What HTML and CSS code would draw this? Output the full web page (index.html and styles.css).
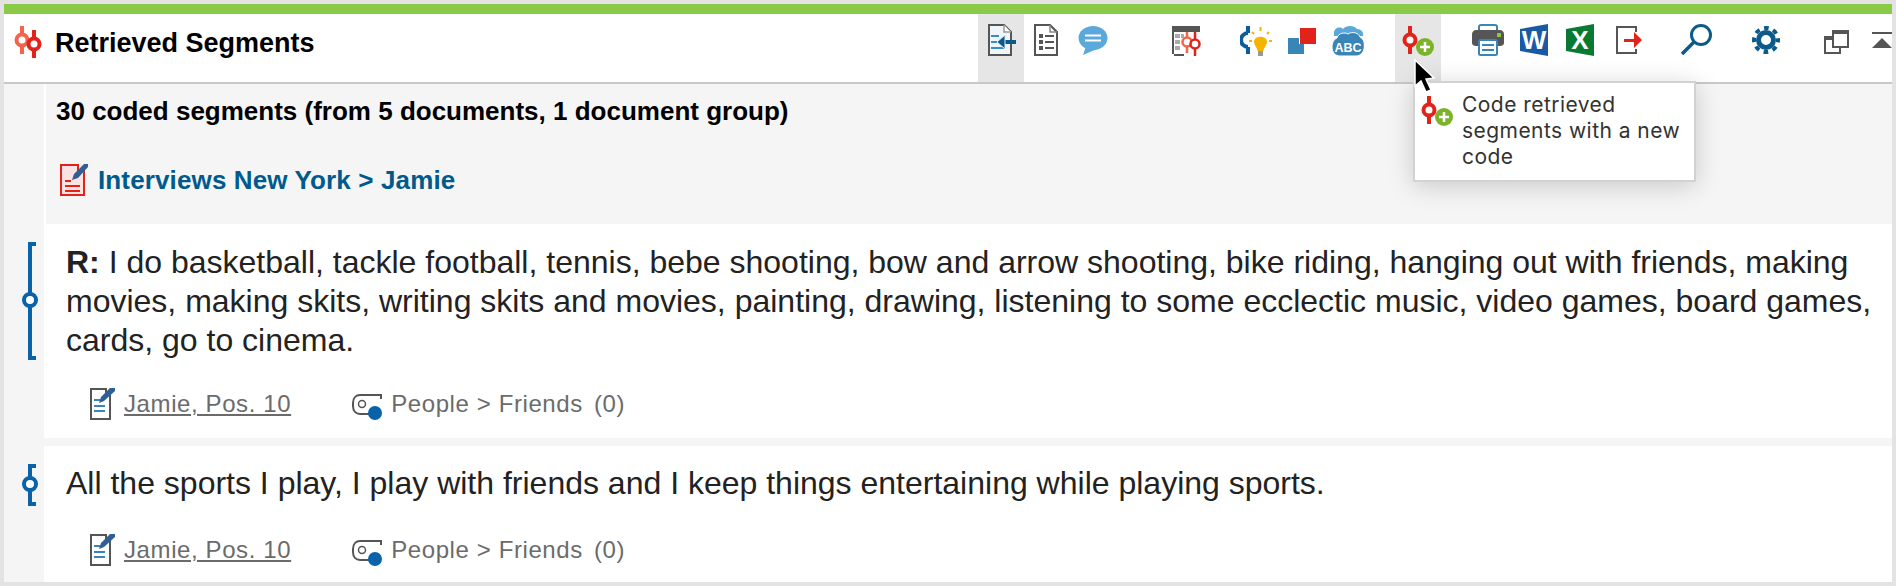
FILE: index.html
```html
<!DOCTYPE html>
<html lang="en">
<head>
<meta charset="utf-8">
<title>Retrieved Segments</title>
<link rel="stylesheet" href="styles.css">
</head>
<body>
<div class="app">
  <div class="accent"></div>
  <header class="toolbar">
    <svg class="title-icon" width="32" height="32" viewBox="0 0 32 32">
      <path d="M8 0V28" fill="none" stroke="#f5634a" stroke-width="4"/>
      <circle cx="8" cy="14" r="5.5" fill="#fff" stroke="#f5634a" stroke-width="4"/>
      <path d="M20 4V32" fill="none" stroke="#e2231a" stroke-width="4"/>
      <circle cx="20" cy="18" r="5.5" fill="#fff" stroke="#e2231a" stroke-width="4"/>
    </svg>
    <h1 class="title">Retrieved Segments</h1>

    <div class="group">
      <div class="tool active">
        <svg width="32" height="32" viewBox="0 0 32 32">
          <path d="M4 1H19L26 8V31H4Z" fill="#eef6fb" stroke="#555" stroke-width="2"/>
          <path d="M19 1V8H26" fill="#fff" stroke="#999" stroke-width="1.5"/>
          <path d="M6 12H14M6 18H12M6 24H19" stroke="#3b8cc4" stroke-width="2"/>
          <path d="M15 18H31" stroke="#0b5a8a" stroke-width="4"/>
          <path d="M12 18L20 11V25Z" fill="#0b5a8a" stroke="#dfeaf2"/>
        </svg>
      </div>
      <div class="tool">
        <svg width="32" height="32" viewBox="0 0 32 32">
          <path d="M4 1H19L26 8V31H4Z" fill="#fff" stroke="#555" stroke-width="2"/>
          <path d="M19 1V8H26" fill="none" stroke="#888" stroke-width="1.5"/>
          <path d="M8 10H12V14H8ZM8 16H12V20H8ZM8 22H12V26H8Z" fill="#555"/>
          <path d="M14 12H23M14 18H23M14 24H23" stroke="#555" stroke-width="2"/>
        </svg>
      </div>
      <div class="tool">
        <svg width="32" height="32" viewBox="0 0 32 32">
          <ellipse cx="16" cy="14" rx="14.5" ry="12" fill="#5ba9db"/>
          <path d="M9 22L6 31L20 25Z" fill="#5ba9db"/>
          <path d="M8 11.5H24M8 16.5H24" stroke="#fff" stroke-width="2"/>
        </svg>
      </div>
    </div>

    <div class="group group-wide">
      <div class="tool">
        <svg width="32" height="32" viewBox="0 0 32 32">
          <path d="M2 2H30V8H4V32H14V30H2Z" fill="#555"/>
          <path d="M5 10H10V14H5ZM5 16H10V20H5ZM5 22H10V26H5ZM11 10H14V14H11Z" fill="#aaa"/>
          <path d="M17 8V29" stroke="#f5634a" stroke-width="2.5" fill="none"/>
          <circle cx="17" cy="18" r="4.5" fill="#fff" stroke="#f5634a" stroke-width="2.5"/>
          <path d="M25 7V32" stroke="#e2231a" stroke-width="2.5" fill="none"/>
          <circle cx="25" cy="20" r="4.5" fill="#fff" stroke="#e2231a" stroke-width="2.5"/>
        </svg>
      </div>
    </div>

    <div class="group">
      <div class="tool">
        <svg width="32" height="32" viewBox="0 0 32 32">
          <path d="M8 2V9M8 23V30" stroke="#0b5e9e" stroke-width="4"/>
          <path d="M8 9A7 7 0 0 0 8 23" fill="none" stroke="#0b5e9e" stroke-width="4"/>
          <path d="M14 18C14 11 27 11 27 18C27 21 24 23 23.500 27H17.500C17 23 14 21 14 18Z" fill="#f4b400"/>
          <rect x="18" y="27" width="5" height="5" fill="#999"/>
          <path d="M9 17H12M29 17H32M12 8L14 10M29 8L27 10M20.500 3V7" stroke="#f4b400" stroke-width="2"/>
        </svg>
      </div>
      <div class="tool">
        <svg width="32" height="32" viewBox="0 0 32 32">
          <rect x="2" y="14" width="16" height="16" fill="#3a85b8"/>
          <rect x="13" y="3" width="17" height="17" fill="#fff"/>
          <rect x="14" y="4" width="16" height="16" fill="#e2231a"/>
        </svg>
      </div>
      <div class="tool">
        <svg width="32" height="32" viewBox="0 0 32 32">
          <path d="M2 9C2 4 8 2 11 5C14 1 22 1 25 5C29 5 32 8 31 12H2Z" fill="#5ba9db"/>
          <path d="M5 14C6 9 13 8 16 10C20 7 27 9 28 13C32 15 33 20 32 25C31 29 28 32 24 32H8C3 32 0 28 0 23C0 19 2 15 5 14Z" fill="#3a85b8" stroke="#fff"/>
          <text class="abc" x="16" y="28">ABC</text>
        </svg>
      </div>
    </div>

    <div class="group">
      <div class="tool active">
        <svg width="32" height="32" viewBox="0 0 32 32">
          <path d="M8 2V30" stroke="#e2231a" stroke-width="4"/>
          <circle cx="8" cy="16" r="5.500" fill="#fff" stroke="#e2231a" stroke-width="4"/>
          <circle cx="23" cy="23" r="9" fill="#7cb32a"/>
          <path d="M18 23H28M23 18V28" stroke="#fff" stroke-width="2.500"/>
        </svg>
      </div>
    </div>

    <div class="group">
      <div class="tool">
        <svg width="32" height="32" viewBox="0 0 32 32">
          <rect x="7" y="1" width="18" height="12" rx="2" fill="#fff" stroke="#3a85b8" stroke-width="2"/>
          <path d="M4 6H28C30 6 32 8 32 10V19C32 21 30 22 28 22H4C2 22 0 21 0 19V10C0 8 2 6 4 6Z" fill="#555"/>
          <rect x="25" y="9" width="4" height="4" fill="#8cc63f"/>
          <rect x="7" y="16" width="18" height="15" rx="1.500" fill="#fff" stroke="#3a85b8" stroke-width="2"/>
          <path d="M10 21H22M10 26H22" stroke="#3a85b8" stroke-width="2"/>
        </svg>
      </div>
      <div class="tool">
        <svg width="32" height="32" viewBox="0 0 32 32">
          <path d="M2 5L30 0V32L2 27Z" fill="#1a5aa5"/>
          <text class="office" x="16" y="25">W</text>
        </svg>
      </div>
      <div class="tool">
        <svg width="32" height="32" viewBox="0 0 32 32">
          <path d="M2 5L30 0V32L2 27Z" fill="#0a7a33"/>
          <text class="office" x="16" y="25">X</text>
        </svg>
      </div>
      <div class="tool">
        <svg width="32" height="32" viewBox="0 0 32 32">
          <path d="M26 8V3H7V29H26V25" fill="none" stroke="#555" stroke-width="2"/>
          <path d="M14 15H24V8L32 16L24 24V18H14Z" fill="#e2231a"/>
        </svg>
      </div>
    </div>

    <div class="group">
      <div class="tool">
        <svg width="32" height="32" viewBox="0 0 32 32">
          <circle cx="21" cy="11" r="9.500" fill="none" stroke="#0b5a8a" stroke-width="3"/>
          <path d="M14 18L2 30" stroke="#0b5a8a" stroke-width="3.500"/>
        </svg>
      </div>
    </div>

    <div class="group">
      <div class="tool">
        <svg width="32" height="32" viewBox="0 0 32 32">
          <circle cx="16" cy="16" r="7.500" fill="none" stroke="#0b5a8a" stroke-width="5"/>
          <circle cx="16" cy="16" r="12" fill="none" stroke="#0b5a8a" stroke-width="4" stroke-dasharray="4.700 4.725" stroke-dashoffset="2.350"/>
        </svg>
      </div>
    </div>

    <div class="group">
      <div class="tool">
        <svg width="32" height="32" viewBox="0 0 32 32">
          <path d="M5 13H20V29H5Z" fill="#fff" stroke="#555" stroke-width="2"/>
          <path d="M4 12H21V16H4Z" fill="#555"/>
          <path d="M13 7H28V23H13Z" fill="#fff" stroke="#555" stroke-width="2"/>
          <path d="M12 6H29V10H12Z" fill="#555"/>
        </svg>
      </div>
      <div class="tool tool-last">
        <svg width="20" height="32" viewBox="0 0 20 32">
          <rect x="0" y="8" width="20" height="2" fill="#555"/>
          <path d="M10 14L20 24H0Z" fill="#555"/>
        </svg>
      </div>
    </div>
  </header>

  <main class="content">
    <section class="row">
      <div class="gutter"></div>
      <div class="summary">
        <p class="count">30 coded segments (from 5 documents, 1 document group)</p>
        <div class="doc-head">
          <svg width="30" height="32" viewBox="0 0 30 32">
            <path d="M1 1H18V6L24 6V31H1Z" fill="#fbe3e3" stroke="#e2231a" stroke-width="2"/>
            <path d="M5 17H11M5 22H20M5 27H20" stroke="#e2231a" stroke-width="2"/>
            <path d="M12 16L14 10L24 0H28V3L18 14Z" fill="#2f5f93"/>
          </svg>
          <h2 class="doc-name">Interviews New York &gt; Jamie</h2>
        </div>
      </div>
    </section>

    <section class="row segment">
      <div class="gutter marker">
        <svg width="20" height="118" viewBox="0 0 20 118">
          <path d="M16 2H10V116H16" fill="none" stroke="#0a62a8" stroke-width="4"/>
          <circle cx="10" cy="58" r="6" fill="#fff" stroke="#0a62a8" stroke-width="4"/>
        </svg>
      </div>
      <div class="seg-body seg-long">
        <p class="seg-text"><b>R:</b> I do basketball, tackle football, tennis, bebe shooting, bow and arrow shooting, bike riding, hanging out with friends, making movies, making skits, writing skits and movies, painting, drawing, listening to some ecclectic music, video games, board games, cards, go to cinema.</p>
        <div class="meta">
          <svg class="meta-doc" width="26" height="32" viewBox="0 0 26 32">
            <path d="M1 1H16V5H20V31H1Z" fill="#fff" stroke="#555" stroke-width="2"/>
            <path d="M4 12H10M4 18H15M4 23H15" stroke="#3a85b8" stroke-width="2"/>
            <path d="M9 15L11 9L20 0H25V3L14 13Z" fill="#2f5f93"/>
          </svg>
          <a class="source">Jamie, Pos. 10</a>
          <svg class="meta-tag" width="32" height="28" viewBox="0 0 32 28">
            <path d="M29 7V3H8C4 3 1 6 1 11V14C1 19 4 22 8 22H19" fill="none" stroke="#555" stroke-width="2"/>
            <circle cx="10" cy="12" r="3.500" fill="none" stroke="#555" stroke-width="1.500"/>
            <circle cx="23" cy="21" r="7" fill="#0a62a8"/>
          </svg>
          <span class="code">People &gt; Friends</span><span class="code-count">(0)</span>
        </div>
      </div>
    </section>

    <div class="row spacer"></div>

    <section class="row segment">
      <div class="gutter marker">
        <svg width="20" height="42" viewBox="0 0 20 42">
          <path d="M16 2H10V40H16" fill="none" stroke="#0a62a8" stroke-width="4"/>
          <circle cx="10" cy="20" r="6" fill="#fff" stroke="#0a62a8" stroke-width="4"/>
        </svg>
      </div>
      <div class="seg-body seg-short">
        <p class="seg-text">All the sports I play, I play with friends and I keep things entertaining while playing sports.</p>
        <div class="meta">
          <svg class="meta-doc" width="26" height="32" viewBox="0 0 26 32">
            <path d="M1 1H16V5H20V31H1Z" fill="#fff" stroke="#555" stroke-width="2"/>
            <path d="M4 12H10M4 18H15M4 23H15" stroke="#3a85b8" stroke-width="2"/>
            <path d="M9 15L11 9L20 0H25V3L14 13Z" fill="#2f5f93"/>
          </svg>
          <a class="source">Jamie, Pos. 10</a>
          <svg class="meta-tag" width="32" height="28" viewBox="0 0 32 28">
            <path d="M29 7V3H8C4 3 1 6 1 11V14C1 19 4 22 8 22H19" fill="none" stroke="#555" stroke-width="2"/>
            <circle cx="10" cy="12" r="3.500" fill="none" stroke="#555" stroke-width="1.500"/>
            <circle cx="23" cy="21" r="7" fill="#0a62a8"/>
          </svg>
          <span class="code">People &gt; Friends</span><span class="code-count">(0)</span>
        </div>
      </div>
    </section>
  </main>

  <div class="tooltip">
    <svg width="32" height="32" viewBox="0 0 32 32">
      <path d="M8 1V29" stroke="#e2231a" stroke-width="4"/>
      <circle cx="8" cy="15" r="5.500" fill="#fff" stroke="#e2231a" stroke-width="4"/>
      <circle cx="23" cy="22" r="9" fill="#7cb32a"/>
      <path d="M18 22H28M23 17V27" stroke="#fff" stroke-width="2.500"/>
    </svg>
    <p class="tooltip-text">Code retrieved segments with a new code</p>
  </div>

  <svg class="cursor" width="24" height="36" viewBox="0 0 24 36">
    <path d="M2 2V28L8 23L13 34L18 32L13 21L21 20Z" fill="#000" stroke="#fff" stroke-width="1.500"/>
  </svg>
</div>
</body>
</html>
```

FILE: styles.css
```css
* { box-sizing: border-box; }

html, body {
  margin: 0;
  height: 100%;
  overflow: hidden;
}

body {
  background: #e3e3e3;
  padding: 4px;
  font-family: "Liberation Sans", Arial, sans-serif;
  color: #222;
}

.app {
  position: relative;
  height: 578px;
  display: flex;
  flex-direction: column;
  background: #fff;
}

.accent {
  height: 10px;
  background: #8aca47;
}

.toolbar {
  height: 70px;
  display: flex;
  align-items: flex-start;
  background: #fff;
  border-bottom: 2px solid #c8c8c8;
}

.title-icon {
  margin: 12px 0 0 10px;
  flex: none;
}

.title {
  flex: 1;
  margin: 0 0 0 9px;
  font-size: 27px;
  font-weight: 700;
  line-height: 58px;
  color: #000;
}

.group {
  display: flex;
  margin-left: 24px;
}

.group-wide { margin-left: 47px; }

.tool {
  width: 46px;
  height: 68px;
  padding-top: 10px;
  display: flex;
  justify-content: center;
  align-items: flex-start;
}

.tool.active { background: #e6e6e6; }

.tool-last {
  width: 33px;
  justify-content: flex-end;
}

.abc {
  font-family: "Liberation Sans", sans-serif;
  font-size: 12.5px;
  font-weight: 700;
  fill: #fff;
  text-anchor: middle;
}

.office {
  font-family: "Liberation Sans", sans-serif;
  font-size: 26px;
  font-weight: 700;
  fill: #fff;
  text-anchor: middle;
}

.content {
  flex: 1;
  display: flex;
  flex-direction: column;
  background: #f5f5f5;
}

.row { display: flex; }

.gutter {
  flex: none;
  width: 42px;
  background: #f5f5f5;
  border-right: 2px solid #fff;
}

.summary {
  flex: 1;
  height: 140px;
  padding: 12px 10px 0;
  background: #f5f5f5;
}

.count {
  margin: 0;
  font-size: 26px;
  font-weight: 700;
  line-height: 30px;
  color: #000;
}

.doc-head {
  display: flex;
  align-items: center;
  margin-top: 38px;
  padding-left: 4px;
}

.doc-name {
  margin: 0 0 0 8px;
  font-size: 26px;
  font-weight: 700;
  letter-spacing: 0.13px;
  line-height: 32px;
  color: #005a8c;
}

.segment { background: #fff; }

.marker {
  width: 40px;
  border-right: 0;
  padding: 18px 0 0 16px;
}

.marker svg { display: block; }

.seg-body {
  flex: 1;
  background: #fff;
  padding-left: 22px;
  padding-right: 12px;
}

.seg-long { height: 214px; padding-top: 19px; }
.seg-short { height: 136px; padding-top: 18px; }

.seg-text {
  margin: 0;
  font-size: 32px;
  line-height: 39px;
  color: #222;
}

.seg-long .meta { margin-top: 28px; }
.seg-short .meta { margin-top: 31px; }

.meta {
  display: flex;
  align-items: center;
  height: 32px;
  padding-left: 24px;
  font-size: 24px;
  color: #6b6b6b;
}

.meta-doc { flex: none; margin-right: 8px; }

.source {
  text-decoration: underline;
  letter-spacing: 0.6px;
  color: #6b6b6b;
}

.meta-tag {
  flex: none;
  margin: 4px 7px 0 61px;
}

.code { letter-spacing: 0.6px; }
.code-count { margin-left: 11px; letter-spacing: 0.6px; }

.spacer {
  height: 8px;
  background: #f5f5f5;
}

.tooltip {
  position: absolute;
  left: 1409px;
  top: 77px;
  width: 283px;
  height: 101px;
  display: flex;
  align-items: flex-start;
  gap: 9px;
  padding: 9px 6px 0;
  background: #fff;
  border: 2px solid #d2d2d2;
  box-shadow: 0 4px 24px rgba(0, 0, 0, 0.18);
}

.tooltip svg { flex: none; margin-top: 3px; }

.tooltip-text {
  margin: 0;
  font-family: Inter, "Liberation Sans", sans-serif;
  font-size: 21px;
  letter-spacing: 0.45px;
  line-height: 26px;
  color: #333;
}

.cursor {
  position: absolute;
  left: 1409px;
  top: 54px;
}
```
